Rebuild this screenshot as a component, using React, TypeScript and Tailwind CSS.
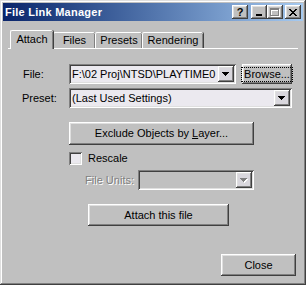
import React from "react";

const raised =
  "shadow-[inset_-1px_-1px_#404040,inset_1px_1px_#ffffff,inset_-2px_-2px_#808080,inset_2px_2px_#dfdfdf]";
const sunken =
  "shadow-[inset_1px_1px_#808080,inset_-1px_-1px_#ffffff,inset_2px_2px_#404040,inset_-2px_-2px_#dfdfdf]";

function Arrow({ disabled = false }: { disabled?: boolean }) {
  return (
    <svg width="8" height="5" viewBox="0 0 8 5" shapeRendering="crispEdges">
      {disabled && <path d="M1 1h7v1h-1v1h-1v1h-1v1h-1v-1h-1v-1h-1z" fill="#ffffff" />}
      <path d="M0 0h7v1h-1v1h-1v1h-1v1h-1v-1h-1v-1h-1v-1h-1z" fill={disabled ? "#808080" : "#000000"} />
    </svg>
  );
}

function Combo({
  width,
  value,
  disabled = false,
}: {
  width: string;
  value?: string;
  disabled?: boolean;
}) {
  return (
    <div
      className={`${width} h-[20px] relative flex items-center ${sunken} ${
        disabled ? "bg-[#c0c0c0]" : "bg-[#ebe9ef]"
      }`}
    >
      <span className="pl-[3px] whitespace-nowrap">{value}</span>
      <div
        className={`absolute right-[2px] top-[2px] w-[16px] h-[16px] flex items-center justify-center bg-[#d9d7dd] ${raised}`}
      >
        <Arrow disabled={disabled} />
      </div>
    </div>
  );
}

function Button({
  className,
  children,
  focused = false,
}: {
  className: string;
  children: React.ReactNode;
  focused?: boolean;
}) {
  return (
    <div className={`flex items-center justify-center bg-[#c0c0c0] ${raised} ${className}`}>
      {focused ? (
        <span className="border border-dotted border-black px-[2px] leading-[13px]">{children}</span>
      ) : (
        children
      )}
    </div>
  );
}

function TitleButton({ children }: { children: React.ReactNode }) {
  return (
    <div className={`w-[16px] h-[14px] bg-[#c0c0c0] flex items-center justify-center ${raised}`}>
      {children}
    </div>
  );
}

export default function App() {
  return (
    <div className="w-[306px] h-[285px] bg-[#c0c0c0] p-[3px] flex flex-col text-[11px] text-black font-['Liberation_Sans',Arial,sans-serif] shadow-[inset_-1px_-1px_#404040,inset_1px_1px_#dfdfdf,inset_-2px_-2px_#808080,inset_2px_2px_#ffffff] select-none">
      {/* title bar */}
      <div className="h-[18px] flex items-center bg-gradient-to-r from-[#0a246a] to-[#a6caf0] pl-[2px] pr-[2px]">
        <span className="text-white font-bold text-[11px] tracking-[0.25px]">File Link Manager</span>
        <div className="ml-auto flex items-center">
          <TitleButton>
            <span className="font-bold text-[11px] leading-none mt-[1px]">?</span>
          </TitleButton>
          <div className="w-[3px]" />
          <TitleButton>
            <svg width="8" height="7" viewBox="0 0 8 7" shapeRendering="crispEdges">
              <rect x="1" y="5" width="6" height="2" fill="#000" />
            </svg>
          </TitleButton>
          <TitleButton>
            <svg width="10" height="9" viewBox="0 0 10 9" shapeRendering="crispEdges">
              <path d="M1 1h9v8h-9zM2 3v5h7v-5z" fill="#ffffff" />
              <path d="M0 0h9v8h-9zM1 2v5h7v-5z" fill="#808080" />
            </svg>
          </TitleButton>
          <div className="w-[2px]" />
          <TitleButton>
            <svg width="8" height="7" viewBox="0 0 8 7" shapeRendering="crispEdges">
              <path
                d="M0 0h2v1h1v1h2v-1h1v-1h2v1h-1v1h-1v1h-1v1h1v1h1v1h1v1h-2v-1h-1v-1h-2v1h-1v1h-2v-1h1v-1h1v-1h1v-1h-1v-1h-1v-1h-1z"
                fill="#000"
              />
            </svg>
          </TitleButton>
        </div>
      </div>

      {/* tabs */}
      <div className="mt-[9px] ml-[5px] w-[290px] h-[19px] flex items-end border-b border-white">
        <div className="ml-[2px] w-[43px] h-[19px] -mb-px relative z-10 bg-[#c0c0c0] rounded-t-[2px] border-t border-l border-white shadow-[inset_-1px_0_#808080,1px_0_#404040] flex items-center justify-center pb-[2px]">
          Attach
        </div>
        <div className="w-[42px] h-[16px] rounded-t-[2px] border-t border-l border-white shadow-[inset_-1px_0_#808080,1px_0_#404040] flex items-center justify-center">
          Files
        </div>
        <div className="w-[47px] h-[16px] rounded-t-[2px] border-t border-l border-white shadow-[inset_-1px_0_#808080,1px_0_#404040] flex items-center justify-center">
          Presets
        </div>
        <div className="w-[61px] h-[16px] rounded-t-[2px] border-t border-l border-white shadow-[inset_-1px_0_#808080,1px_0_#404040] flex items-center justify-center">
          Rendering
        </div>
      </div>

      {/* form */}
      <div className="ml-[19px] flex flex-col">
        <div className="mt-[15px] h-[20px] flex items-center">
          <span className="w-[47px] pl-[1px]">File:</span>
          <Combo width="w-[167px]" value="F:\02 Proj\NTSD\PLAYTIME0" />
          <Button className="ml-[6px] w-[50px] h-[20px]" focused>
            Browse...
          </Button>
        </div>
        <div className="mt-[4px] h-[20px] flex items-center">
          <span className="w-[47px]">Preset:</span>
          <Combo width="w-[223px]" value="(Last Used Settings)" />
        </div>
        <Button className="mt-[14px] ml-[47px] w-[185px] h-[23px]">
          <span>
            Exclude Objects by <span className="underline">L</span>ayer...
          </span>
        </Button>
        <div className="mt-[7px] ml-[47px] h-[13px] flex items-center">
          <div className={`w-[13px] h-[13px] bg-[#ebe9ef] ${sunken}`} />
          <span className="ml-[6px]">Rescale</span>
        </div>
        <div className="mt-[5px] h-[20px] flex items-center">
          <span className="w-[116px] pr-[4px] text-right text-[#808080] [text-shadow:1px_1px_#ffffff]">
            File Units:
          </span>
          <Combo width="w-[116px]" disabled />
        </div>
        <Button className="mt-[14px] ml-[66px] w-[141px] h-[22px]">Attach this file</Button>
      </div>

      <div className="mt-auto mb-[6px] mr-[7px] flex justify-end">
        <Button className="w-[75px] h-[22px]">Close</Button>
      </div>
    </div>
  );
}
